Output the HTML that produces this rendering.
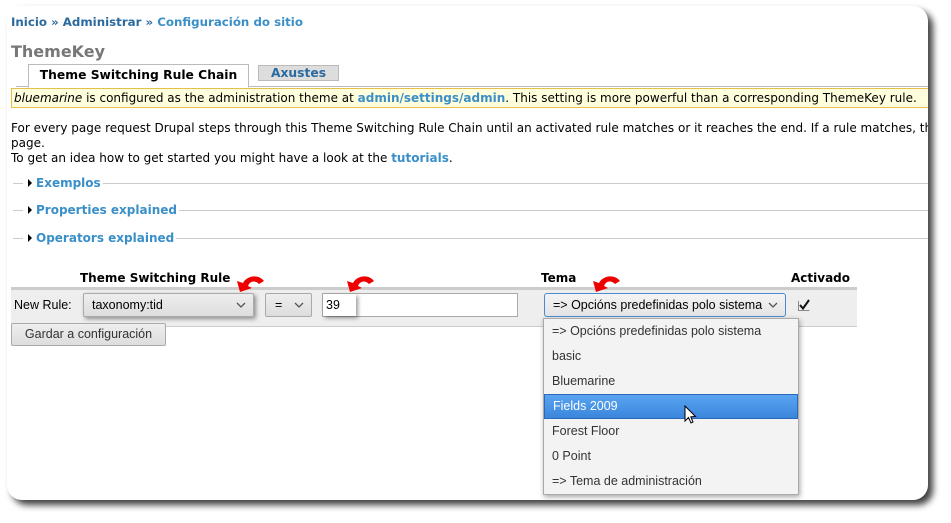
<!DOCTYPE html>
<html><head><meta charset="utf-8"><style>
body{margin:0;width:951px;height:523px;background:#fff;overflow:hidden;position:relative;font-family:"DejaVu Sans",sans-serif;font-size:12px;color:#000}
.card{position:absolute;left:7px;top:6px;width:921px;height:494px;background:#fff;border-radius:15px;box-shadow:5px 5px 7px rgba(0,0,0,.75);overflow:hidden}
.a{position:absolute;white-space:nowrap}
.l{color:#3a8fc8;font-weight:bold;text-decoration:none}
.f{font-family:"Liberation Sans","DejaVu Sans",sans-serif;font-size:12.5px}
.arrow{position:absolute;width:30px;height:22px}
.chev{position:absolute;right:7px;top:8px}
.leg{position:absolute;left:16px;background:#fff;padding:0 2px 0 5px;font-weight:bold;color:#3a8fc8;white-space:nowrap}
.tri{display:inline-block;width:0;height:0;border-left:4px solid #000;border-top:4px solid transparent;border-bottom:4px solid transparent;margin-right:4px;vertical-align:0}
</style></head><body>
<div class="card">
<div class="a" style="left:4px;top:9px;font-weight:bold;font-size:11.8px;color:#2a6a9e">Inicio » Administrar » <span style="color:#3a8fc8">Configuración do sitio</span></div>
<div class="a" style="left:4px;top:36px;font-weight:bold;font-size:16px;color:#777">ThemeKey</div>
<div style="position:absolute;left:9px;top:80px;width:920px;height:1px;background:#bbb"></div>
<div class="a" style="left:21px;top:58px;width:219px;height:22px;border:1px solid #bbb;border-bottom:1px solid #fff;background:#fff;text-align:center;line-height:20px;font-weight:bold;font-size:12.3px">Theme Switching Rule Chain</div>
<div class="a" style="left:251px;top:59px;width:79px;height:14px;border:1px solid #bbb;background:#ddd;text-align:center;line-height:14px;font-weight:bold;font-size:12.3px;color:#2a6a9e">Axustes</div>
<div class="a" style="left:4px;top:82px;width:930px;height:18px;background:#ffffdd;border:1px solid #e6c04a;line-height:18px;padding-left:2px"><i>bluemarine</i> is configured as the administration theme at <span class="l">admin/settings/admin</span>. This setting is more powerful than a corresponding ThemeKey rule.</div>
<div class="a" style="left:4px;top:115px;line-height:15px">For every page request Drupal steps through this Theme Switching Rule Chain until an activated rule matches or it reaches the end. If a rule matches, th<br>page.<br>To get an idea how to get started you might have a look at the <span class="l">tutorials</span>.</div>

<div class="a" style="left:6px;top:177px;width:915px;height:1px;background:#ccc"></div>
<div class="a" style="left:6px;top:204px;width:915px;height:1px;background:#ccc"></div>
<div class="a" style="left:6px;top:232px;width:915px;height:1px;background:#ccc"></div>
<div class="leg" style="top:170px"><span class="tri"></span>Exemplos</div>
<div class="leg" style="top:197px"><span class="tri"></span>Properties explained</div>
<div class="leg" style="top:225px"><span class="tri"></span>Operators explained</div>

<div class="a" style="left:73px;top:265px;font-weight:bold">Theme Switching Rule</div>
<div class="a" style="left:534px;top:265px;font-weight:bold">Tema</div>
<div class="a" style="left:784px;top:265px;font-weight:bold">Activado</div>
<div class="a" style="left:4px;top:281px;width:846px;height:36px;background:#eee;border-top:3px solid #ccc;border-bottom:1px solid #ccc"></div>
<div class="a f" style="left:7px;top:292px">New Rule:</div>
<div class="a f" style="left:76px;top:287px;width:161px;height:22px;border:1px solid #aaa;border-radius:2px;background:linear-gradient(#eee,#ddd);line-height:22px;padding-left:8px;box-shadow:2px 2px 4px rgba(0,0,0,.4)">taxonomy:tid<svg class="chev" width="10" height="7"><path d="M1 1L5 5L9 1" fill="none" stroke="#555" stroke-width="1.3"/></svg></div>
<div class="a f" style="left:258px;top:287px;width:36px;height:22px;border:1px solid #aaa;border-radius:2px;background:linear-gradient(#eee,#ddd);line-height:22px;padding-left:9px">=<svg class="chev" width="10" height="7"><path d="M1 1L5 5L9 1" fill="none" stroke="#555" stroke-width="1.3"/></svg></div>
<div class="a f" style="left:315px;top:287px;width:191px;height:22px;border:1px solid #aaa;background:#fff;line-height:22px;padding-left:3px">39</div>
<div class="a" style="left:316px;top:288px;width:33px;height:22px;box-shadow:2px 2px 4px rgba(0,0,0,.4)"></div>
<div class="a f" style="left:537px;top:287px;width:232px;height:22px;border:1px solid #4a8ad0;border-radius:3px;background:linear-gradient(#f4f4f4,#e4e4e4);line-height:22px;padding-left:8px">=&gt; Opcións predefinidas polo sistema<svg class="chev" width="10" height="7"><path d="M1 1L5 5L9 1" fill="none" stroke="#555" stroke-width="1.3"/></svg></div>
<svg class="a" style="left:790px;top:292px" width="14" height="14"><path d="M1.5 3V12.5H12.5" fill="none" stroke="#888"/><path d="M3 7L6 10.5L12 2" fill="none" stroke="#111" stroke-width="2"/></svg>
<div class="a f" style="left:4px;top:317px;width:153px;height:21px;border:1px solid #aaa;border-radius:2px;background:linear-gradient(#eee,#ddd);line-height:21px;text-align:center;color:#333">Gardar a configuración</div>

<div class="a f" style="left:536px;top:312px;width:254px;height:175px;border:1px solid #aaa;background:#f3f3f3;box-shadow:1px 2px 5px rgba(0,0,0,.35);color:#333">
<div style="height:25px;line-height:25px;padding-left:8px">=&gt; Opcións predefinidas polo sistema</div>
<div style="height:25px;line-height:25px;padding-left:8px">basic</div>
<div style="height:25px;line-height:25px;padding-left:8px">Bluemarine</div>
<div style="height:23px;line-height:23px;padding-left:8px;background:linear-gradient(#5aa4f0,#3a86dc);border:1px solid #2a6ab8;color:#fff">Fields 2009</div>
<div style="height:25px;line-height:25px;padding-left:8px">Forest Floor</div>
<div style="height:25px;line-height:25px;padding-left:8px">0 Point</div>
<div style="height:25px;line-height:25px;padding-left:8px">=&gt; Tema de administración</div>
</div>
<svg class="a" style="left:677px;top:399px" width="14" height="22" viewBox="0 0 14 22"><path d="M1 1 L1 16 L4.5 12.5 L7 18 L9 17 L6.8 11.8 L11.5 11.5 Z" fill="#fff" stroke="#000" stroke-width="1"/></svg>

<svg class="arrow" style="left:228px;top:266px" viewBox="0 0 30 22"><path d="M5 20 L2 9 L8 11 C12 3 24 2 29 9 L24 12 C20 8 15 9 13 14 L17 16 Z" fill="#e00"/></svg>
<svg class="arrow" style="left:338px;top:266px" viewBox="0 0 30 22"><path d="M5 20 L2 9 L8 11 C12 3 24 2 29 9 L24 12 C20 8 15 9 13 14 L17 16 Z" fill="#e00"/></svg>
<svg class="arrow" style="left:584px;top:266px" viewBox="0 0 30 22"><path d="M5 20 L2 9 L8 11 C12 3 24 2 29 9 L24 12 C20 8 15 9 13 14 L17 16 Z" fill="#e00"/></svg>
</div>
</body></html>
